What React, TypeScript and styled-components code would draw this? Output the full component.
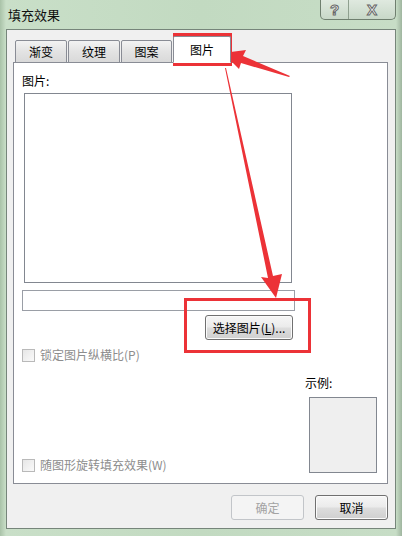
import styled, { createGlobalStyle } from "styled-components";

const GlobalStyle = createGlobalStyle`
  html, body {
    margin: 0;
    padding: 0;
  }
  body {
    font-family: "Noto Sans CJK SC", "Liberation Sans", sans-serif;
    font-size: 12px;
    color: #000;
  }
`;

const Frame = styled.div`
  position: relative;
  width: 402px;
  height: 536px;
  overflow: hidden;
  background: linear-gradient(90deg, #a9c2a8 0px, #c9dfc8 6px, #c2dac1 50%, #c7ddc6 396px, #9fb59f 402px);
  display: flex;
  flex-direction: column;
`;

const TitleBar = styled.div`
  height: 29px;
  display: flex;
  align-items: flex-start;
  justify-content: space-between;
  flex-shrink: 0;
`;

const Title = styled.div`
  padding: 6px 0 0 8px;
  font-size: 13px;
  line-height: 17px;
  color: #101010;
`;

const CaptionGroup = styled.div`
  display: flex;
  margin-right: 6px;
  border: 1px solid #6f7f6f;
  border-top: none;
  border-radius: 0 0 5px 5px;
  overflow: hidden;
  background: linear-gradient(#dfe9df, #c8d8c8);
`;

const CaptionButton = styled.div<{ $w: number }>`
  width: ${(p) => p.$w}px;
  height: 19px;
  display: flex;
  align-items: center;
  justify-content: center;
  font-family: "Liberation Sans", sans-serif;
  font-weight: bold;
  font-size: 15px;
  color: #fff;
  -webkit-text-stroke: 1px #666;
  & + & {
    border-left: 1px solid #8fa08f;
  }
`;

const Client = styled.div`
  margin-left: 6px;
  width: 390px;
  height: 500px;
  box-sizing: border-box;
  border: 1px solid #76857a;
  background: #f0f0f0;
  padding: 0 7px 0 6px;
  display: flex;
  flex-direction: column;
`;

const TabStrip = styled.div`
  height: 33px;
  display: flex;
  align-items: flex-end;
  padding-left: 2px;
  position: relative;
  z-index: 1;
  margin-bottom: -1px;
`;

const Tab = styled.div<{ $active?: boolean; $w: number }>`
  box-sizing: border-box;
  width: ${(p) => p.$w}px;
  height: ${(p) => (p.$active ? 27 : 23)}px;
  margin-right: ${(p) => (p.$active ? 0 : 1)}px;
  border: 1px solid #898c95;
  border-bottom: ${(p) => (p.$active ? "1px solid #fff" : "1px solid #898c95")};
  border-radius: 2px 2px 0 0;
  background: ${(p) => (p.$active ? "#fff" : "linear-gradient(#f3f3f3, #e3e3e3 50%, #d9d9d9)")};
  display: flex;
  align-items: center;
  justify-content: center;
  padding-top: 1px;
  font-size: 12px;
  line-height: 16px;
`;

const Panel = styled.div`
  box-sizing: border-box;
  height: 422px;
  border: 1px solid #898c95;
  background: #fff;
  padding: 10px 10px 10px 8px;
  display: flex;
  flex-direction: column;
`;

const Label = styled.div`
  line-height: 16px;
  height: 16px;
`;

const PictureBox = styled.div`
  margin: 4px 0 0 2px;
  width: 268px;
  height: 190px;
  box-sizing: border-box;
  border: 1px solid #828790;
  background: #fff;
`;

const PathField = styled.div`
  margin-top: 7px;
  width: 273px;
  height: 21px;
  box-sizing: border-box;
  border: 1px solid #9a9ea6;
  background: #fff;
`;

const ButtonRow = styled.div`
  width: 271px;
  margin-top: 4px;
  display: flex;
  justify-content: flex-end;
`;

const PushButton = styled.div<{ $w: number; $disabled?: boolean }>`
  box-sizing: border-box;
  width: ${(p) => p.$w}px;
  height: 25px;
  border: 1px solid ${(p) => (p.$disabled ? "#c2c5c9" : "#707070")};
  border-radius: 3px;
  background: ${(p) =>
    p.$disabled ? "#f4f4f4" : "linear-gradient(#f6f6f6, #ebebeb 48%, #dddddd 52%, #cfcfcf)"};
  color: ${(p) => (p.$disabled ? "#a3a3a3" : "#000")};
  display: flex;
  align-items: center;
  justify-content: center;
  font-size: 12px;
  line-height: 16px;
  box-shadow: inset 0 0 0 1px ${(p) => (p.$disabled ? "transparent" : "#fbfbfb")};
`;

const Underline = styled.span`
  text-decoration: underline;
`;

const CheckRow = styled.div<{ $mt?: number }>`
  display: flex;
  align-items: center;
  gap: 5px;
  margin-top: ${(p) => p.$mt ?? 0}px;
  color: #8d8d8d;
  line-height: 16px;
`;

const CheckBox = styled.span`
  width: 13px;
  height: 13px;
  box-sizing: border-box;
  border: 1px solid #b9b9b9;
  background: linear-gradient(135deg, #e6e6e6, #fafafa);
`;

const BottomArea = styled.div`
  flex: 1;
  display: flex;
  justify-content: space-between;
  align-items: flex-end;
`;

const SampleGroup = styled.div`
  display: flex;
  flex-direction: column;
  align-items: flex-start;
`;

const SampleBox = styled.div`
  margin: 6px 0 0 4px;
  width: 68px;
  height: 76px;
  box-sizing: border-box;
  border: 1px solid #828790;
  background: #efefef;
`;

const Footer = styled.div`
  display: flex;
  justify-content: flex-end;
  gap: 11px;
  margin-top: 11px;
`;

const Overlay = styled.svg`
  position: absolute;
  left: 0;
  top: 0;
  pointer-events: none;
`;

const Annotations = () => (
  <Overlay width={402} height={536} viewBox="0 0 402 536">
    <rect x={174.5} y={34.5} width={56} height={30} fill="none" stroke="#ec3237" strokeWidth={3} />
    <rect x={185.5} y={299.5} width={124} height={52} fill="none" stroke="#ec3237" strokeWidth={3} />
    <polygon
      fill="#ec3237"
      points="290,76 243,56 246,50 223,53 239,69 241,63 289,77"
    />
    <polygon
      fill="#ec3237"
      points="225,68 226,68 273,276 282,274 276,298 261,277 268,278"
    />
  </Overlay>
);

export default function App() {
  return (
    <>
      <GlobalStyle />
      <Frame>
        <TitleBar>
          <Title>填充效果</Title>
          <CaptionGroup>
            <CaptionButton $w={27}>?</CaptionButton>
            <CaptionButton $w={46}>X</CaptionButton>
          </CaptionGroup>
        </TitleBar>
        <Client>
          <TabStrip>
            <Tab $w={52}>渐变</Tab>
            <Tab $w={52}>纹理</Tab>
            <Tab $w={51}>图案</Tab>
            <Tab $w={58} $active>
              图片
            </Tab>
          </TabStrip>
          <Panel>
            <Label>图片:</Label>
            <PictureBox />
            <PathField />
            <ButtonRow>
              <PushButton $w={88}>
                选择图片(<Underline>L</Underline>)...
              </PushButton>
            </ButtonRow>
            <CheckRow $mt={7}>
              <CheckBox />
              锁定图片纵横比(P)
            </CheckRow>
            <BottomArea>
              <CheckRow>
                <CheckBox />
                随图形旋转填充效果(W)
              </CheckRow>
              <SampleGroup>
                <Label>示例:</Label>
                <SampleBox />
              </SampleGroup>
            </BottomArea>
          </Panel>
          <Footer>
            <PushButton $w={73} $disabled>
              确定
            </PushButton>
            <PushButton $w={73}>取消</PushButton>
          </Footer>
        </Client>
        <Annotations />
      </Frame>
    </>
  );
}
